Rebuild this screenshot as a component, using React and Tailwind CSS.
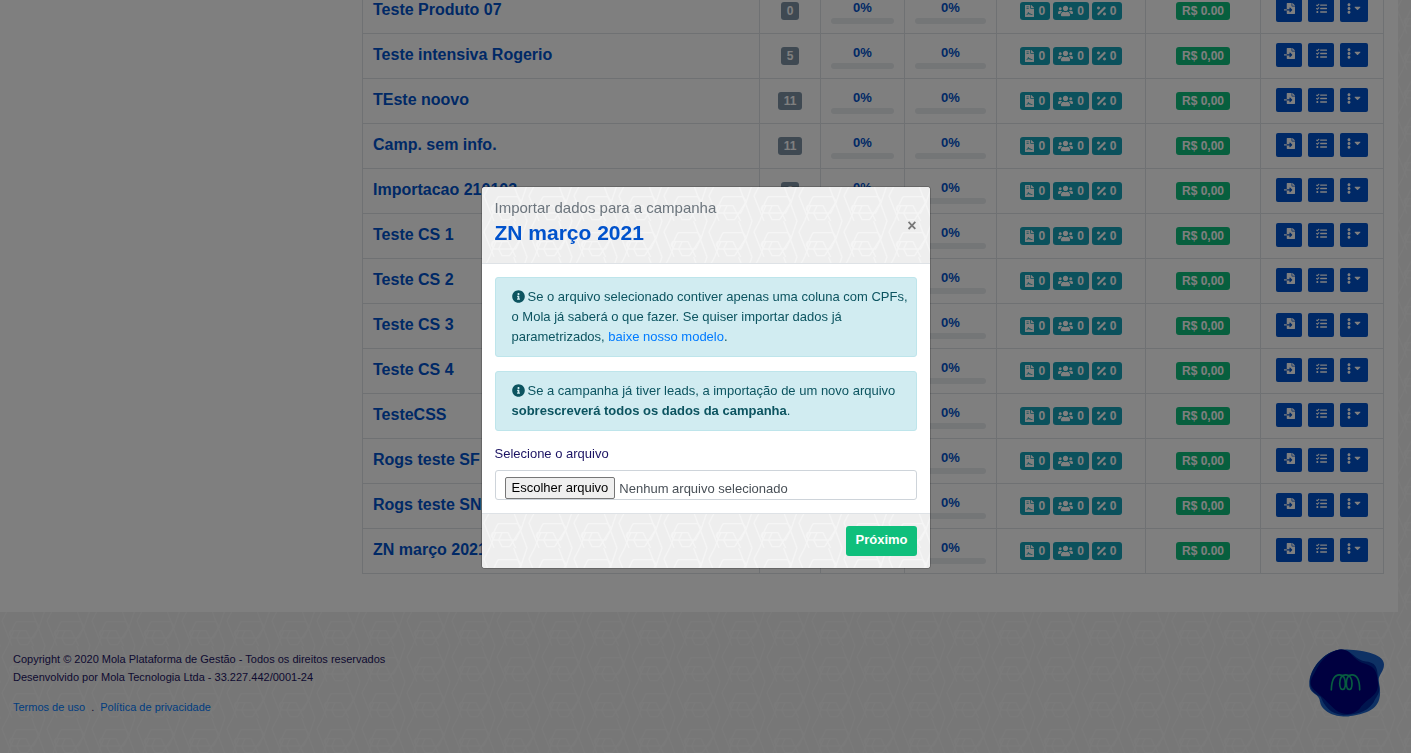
import React, { useId } from 'react';
import {
    FaFileContract,
    FaUsers,
    FaPercentage,
    FaFileImport,
    FaTasks,
    FaEllipsisV,
    FaCaretDown,
    FaInfoCircle,
} from 'react-icons/fa';

const campaigns = [
    { name: 'Teste Produto 07', leads: 0, value: 'R$ 0.00' },
    { name: 'Teste intensiva Rogerio', leads: 5, value: 'R$ 0,00' },
    { name: 'TEste noovo', leads: 11, value: 'R$ 0,00' },
    { name: 'Camp. sem info.', leads: 11, value: 'R$ 0,00' },
    { name: 'Importacao 210103', leads: 0, value: 'R$ 0,00' },
    { name: 'Teste CS 1', leads: 0, value: 'R$ 0,00' },
    { name: 'Teste CS 2', leads: 0, value: 'R$ 0,00' },
    { name: 'Teste CS 3', leads: 0, value: 'R$ 0,00' },
    { name: 'Teste CS 4', leads: 0, value: 'R$ 0,00' },
    { name: 'TesteCSS', leads: 0, value: 'R$ 0,00' },
    { name: 'Rogs teste SF', leads: 0, value: 'R$ 0,00' },
    { name: 'Rogs teste SN', leads: 0, value: 'R$ 0,00' },
    { name: 'ZN março 2021', leads: 0, value: 'R$ 0.00' },
];

// Repeating line texture used behind the page, the modal header and footer
const Texture = () => {
    const id = useId();
    return (
        <svg className="absolute inset-0 h-full w-full" aria-hidden="true">
            <defs>
                <pattern
                    id={id}
                    width="135"
                    height="108"
                    patternUnits="userSpaceOnUse"
                    patternTransform="translate(1 -2) scale(0.3333)"
                >
                    <g fill="none" stroke="#f5f5f5" strokeWidth="4">
                        <path d="M20 0 L3 33 L33 108" />
                        <path d="M38 62 L20 108" />
                        <path d="M92 0 L132 108 M132 0 L115 50" />
                        <path d="M45 35 H105 L115 50 L98 84 H33 L25 70 L29 62 H75 L98 108" />
                        <path d="M45 35 L25 76 M57 62 L47 84 L57 104 H80 L115 50" />
                    </g>
                </pattern>
            </defs>
            <rect width="100%" height="100%" fill={`url(#${id})`} />
        </svg>
    );
};

const Progress = () => (
    <div className="flex flex-col gap-0.5 pt-0.5">
        <span className="text-center text-[13px] leading-4 font-bold text-[#0052cc]">0%</span>
        <div className="h-1.5 rounded-full bg-[#e9ecef]" />
    </div>
);

const Badge = ({ children }) => (
    <span className="flex h-[18px] items-center gap-1 rounded-[3px] bg-[#17a2b8] px-[5px] text-xs font-bold text-white">
        {children}
    </span>
);

const ActionButton = ({ label, children }) => (
    <button
        type="button"
        aria-label={label}
        className="flex h-6 min-w-[26px] items-start justify-center gap-[3px] rounded-[2px] bg-[#0052cc] px-[7px] pt-[5px] text-white"
    >
        {children}
    </button>
);

const CampaignRow = ({ campaign }) => (
    <tr className="h-[45px]">
        <td className="border border-[#dee2e6] px-2.5 pb-0.5 text-base font-bold whitespace-nowrap text-[#0052cc]">
            {campaign.name}
        </td>
        <td className="border border-[#dee2e6]">
            <div className="flex justify-center">
                <span className="flex h-[18px] items-center rounded-[3px] bg-[#7e93a5] px-1.5 text-xs font-bold text-white">
                    {campaign.leads}
                </span>
            </div>
        </td>
        <td className="border border-[#dee2e6] px-2.5">
            <Progress />
        </td>
        <td className="border border-[#dee2e6] px-2.5">
            <Progress />
        </td>
        <td className="border border-[#dee2e6]">
            <div className="flex justify-center gap-[3px]">
                <Badge>
                    <FaFileContract className="h-3 w-[9px]" />0
                </Badge>
                <Badge>
                    <FaUsers className="h-3 w-[15px]" />0
                </Badge>
                <Badge>
                    <FaPercentage className="h-3 w-[9px]" />0
                </Badge>
            </div>
        </td>
        <td className="border border-[#dee2e6]">
            <div className="flex justify-center">
                <span className="flex h-[18px] items-center rounded-[3px] bg-[#0fbf7c] px-1.5 text-xs font-bold text-white">
                    {campaign.value}
                </span>
            </div>
        </td>
        <td className="border border-[#dee2e6]">
            <div className="flex justify-center gap-1.5 pb-0.5">
                <ActionButton label="Importar">
                    <FaFileImport className="size-[11px]" />
                </ActionButton>
                <ActionButton label="Tarefas">
                    <FaTasks className="size-[11px]" />
                </ActionButton>
                <ActionButton label="Mais opções">
                    <FaEllipsisV className="h-[11px] w-1" />
                    <FaCaretDown className="h-2.5 w-[7px]" />
                </ActionButton>
            </div>
        </td>
    </tr>
);

const Logo = () => (
    <svg className="h-[68px] w-[75px]" viewBox="87 57 225 203" aria-label="Mola" role="img">
        <path
            fill="#1c62c8"
            d="M180 58 C225 56 312 66 312 102 C312 128 292 132 297 158 C300 176 302 190 298 206 C288 246 240 254 205 259 C170 262 124 246 120 214 C118 190 92 192 88 168 C84 120 130 64 180 58 Z"
        />
        <path
            fill="#002a9c"
            d="M180 58 C215 56 226 92 258 94 C300 98 290 130 297 165 C302 190 290 196 280 218 C258 250 220 254 190 255 C150 252 132 226 122 200 C94 186 88 172 90 146 C100 100 140 64 180 58 Z"
        />
        <path
            fill="#000080"
            d="M185 58 C212 58 220 88 246 98 C286 110 290 120 294 158 C296 200 262 202 240 234 C222 256 190 256 168 240 C146 222 136 208 112 188 C88 168 86 158 104 128 C124 84 154 60 185 58 Z"
        />
        <path
            fill="none"
            stroke="#10b981"
            strokeWidth="5"
            strokeLinecap="round"
            d="M154 179 C155 148 164 134 178 134 C194 134 196 150 196 160 C196 184 180 184 179 160 C179 144 186 134 197 134 C210 134 216 146 216 160 C216 184 200 184 199 160 C199 144 205 134 216 134 C232 134 239 150 239 179"
        />
    </svg>
);

const Footer = () => (
    <footer className="relative flex items-start justify-between pt-[37px] pr-[27px] pb-9 pl-[13px] text-[11px] leading-[18px] text-[#1c1463]">
        <div>
            <p className="pt-px">Copyright © 2020 Mola Plataforma de Gestão - Todos os direitos reservados</p>
            <p>Desenvolvido por Mola Tecnologia Ltda - 33.227.442/0001-24</p>
            <p className="mt-3 flex gap-1.5">
                <a href="#termos" className="text-[#007bff]">Termos de uso</a>
                <span>.</span>
                <a href="#privacidade" className="text-[#007bff]">Política de privacidade</a>
            </p>
        </div>
        <Logo />
    </footer>
);

const Alert = ({ children }) => (
    <div className="rounded-[3px] border border-[#bee5eb] bg-[#d1ecf1] py-[9px] pr-1 pl-4 text-[13px] leading-5 text-[#0c5460]">
        <FaInfoCircle className="mr-[3px] inline-block align-[-2px]" />
        {children}
    </div>
);

const ImportModal = () => (
    <div className="fixed inset-0 flex items-center justify-center bg-black/50 pt-0.5">
        <div
            role="dialog"
            aria-labelledby="import-title"
            className="w-full max-w-[450px] overflow-hidden rounded-[4px] border border-black/20 bg-white bg-clip-padding"
        >
            <header className="relative flex items-center justify-between border-b border-[#dee2e6] bg-[#eeeeee] px-[13px] pt-[9px] pb-[17px]">
                <Texture />
                <div className="relative">
                    <p className="text-[15px] leading-6 text-[#6c757d]">Importar dados para a campanha</p>
                    <h2 id="import-title" className="text-[21px] leading-[26px] font-bold text-[#0052cc]">
                        ZN março 2021
                    </h2>
                </div>
                <button type="button" aria-label="Fechar" className="relative mt-2.5 text-base leading-5 font-bold text-[#777777]">
                    ×
                </button>
            </header>

            <div className="flex flex-col gap-3.5 px-[13px] py-[13px]">
                <Alert>
                    Se o arquivo selecionado contiver apenas uma coluna com CPFs, o Mola já saberá o que fazer. Se quiser
                    importar dados já parametrizados, <a href="#modelo" className="text-[#007bff]">baixe nosso modelo</a>.
                </Alert>
                <Alert>
                    Se a campanha já tiver leads, a importação de um novo arquivo{' '}
                    <strong>sobrescreverá todos os dados da campanha</strong>.
                </Alert>
                <div className="text-[13px]">
                    <label htmlFor="arquivo" className="mb-[7px] block leading-[18px] text-[#1c1463]">
                        Selecione o arquivo
                    </label>
                    <div className="relative flex h-[30px] items-end gap-1 rounded-[3px] border border-[#ced4da] px-[9px] text-[#495057]">
                        <span className="rounded-[2px] border border-[#767676] bg-[#efefef] px-1.5 leading-5 text-black">
                            Escolher arquivo
                        </span>
                        <span className="leading-5">Nenhum arquivo selecionado</span>
                        <input id="arquivo" type="file" className="absolute inset-0 h-full w-full opacity-0" />
                    </div>
                </div>
            </div>

            <div className="relative flex justify-end border-t border-[#dee2e6] bg-[#eeeeee] px-[13px] py-3">
                <Texture />
                <button
                    type="button"
                    className="relative h-[30px] rounded-[3px] bg-[#0fbf7c] px-[9px] pb-0.5 text-[13px] font-bold text-white"
                >
                    Próximo
                </button>
            </div>
        </div>
    </div>
);

const App = () => (
    <div className="relative flex h-screen flex-col justify-end overflow-hidden bg-[#eeeeee] font-['Liberation_Sans',Arial,sans-serif]">
        <Texture />
        <main className="relative mr-[13px] flex shrink-0 bg-white pb-[38px]">
            <aside className="w-[362px] shrink-0" />
            <div className="min-w-0 flex-1 pr-3.5">
                <table className="w-full table-fixed border-collapse">
                    <colgroup>
                        <col />
                        <col className="w-[61px]" />
                        <col className="w-[84px]" />
                        <col className="w-[92px]" />
                        <col className="w-[149px]" />
                        <col className="w-[115px]" />
                        <col className="w-[123px]" />
                    </colgroup>
                    <tbody>
                        {campaigns.map((campaign) => (
                            <CampaignRow key={campaign.name} campaign={campaign} />
                        ))}
                    </tbody>
                </table>
            </div>
        </main>
        <Footer />
        <ImportModal />
    </div>
);

export default App;
